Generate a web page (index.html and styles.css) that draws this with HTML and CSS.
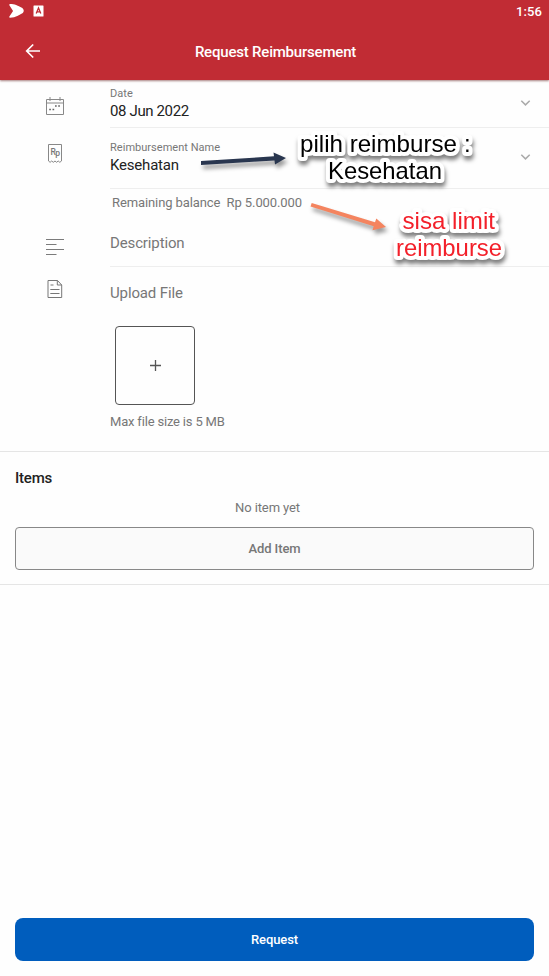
FILE: index.html
```html
<!DOCTYPE html>
<html lang="en">
<head>
<meta charset="utf-8">
<title>Request Reimbursement</title>
<link rel="stylesheet" href="styles.css">
</head>
<body>
<div class="screen">
  <header class="header">
    <div class="status">
      <svg class="status-icons" width="40" height="18" viewBox="0 0 40 18">
        <path d="M2 4.800 Q6 4.300 9.500 6.300 L14 8.700 Q16 10.800 14 12.700 L9.500 15 Q6 17 2 17 L6 11 Z" fill="#fff" stroke="#fff" stroke-width="1.500" stroke-linejoin="round"/>
        <rect x="25.500" y="5.500" width="10" height="11" rx=".5" fill="#fff"/>
        <path d="M28.200 13.500 L30.500 8 L32.800 13.500 M29 11.800 H32" fill="none" stroke="#c12c34" stroke-width="1.300"/>
      </svg>
      <span class="time">1:56</span>
    </div>
    <div class="bar">
      <svg class="back" width="16" height="16" viewBox="0 0 16 16"><path d="M8.200 1.500 L1.700 8 L8.200 14.500 M1.700 8 H15" fill="none" stroke="#fff" stroke-width="1.700"/></svg>
      <h1>Request Reimbursement</h1>
    </div>
  </header>
  <main>
    <section class="row date-row">
      <svg class="icon" width="20" height="20" viewBox="0 0 20 20"><path d="M1.500 3.500 H18.500 V18.500 H1.500 Z M1.500 7 H18.500 M5 1 V5 M15 1 V5" fill="none" stroke="#888" stroke-width="1"/><path d="M4.200 13.500 h1.700 M7.500 13.500 h1.700 M10 10 h1.700 M13.200 10 h1.700" stroke="#666" stroke-width="1.600"/></svg>
      <div class="field">
        <div class="label">Date</div>
        <div class="value">08 Jun 2022</div>
        <svg class="chevron" width="11" height="8" viewBox="0 0 11 8"><path d="M1.300 1.700 L5.500 5.900 L9.700 1.700" fill="none" stroke="#aaa" stroke-width="1.500"/></svg>
      </div>
    </section>
    <section class="row name-row">
      <svg class="icon" width="20" height="22" viewBox="0 0 20 22"><path d="M3.500 19 V2.500 H16.500 V19 M3.500 19 l1.600 1.300 l1.600-1.300 l1.600 1.300 l1.700-1.300 l1.600 1.300 l1.600-1.300 l1.600 1.300 l1.700-1.300" fill="none" stroke="#888" stroke-width="1"/><text x="5.600" y="13.200" class="rp">R</text><text x="10.200" y="14.400" class="rp">p</text></svg>
      <div class="field">
        <div class="label">Reimbursement Name</div>
        <div class="value kesehatan">Kesehatan</div>
        <svg class="chevron" width="11" height="8" viewBox="0 0 11 8"><path d="M1.300 1.700 L5.500 5.900 L9.700 1.700" fill="none" stroke="#aaa" stroke-width="1.500"/></svg>
      </div>
    </section>
    <section class="row desc-row">
      <svg class="icon" width="20" height="20" viewBox="0 0 20 20"><path d="M1 2.500 H19 M1 7.500 H11.500 M1 12.500 H19 M1 17.500 H11.500" stroke="#7b7b7b" stroke-width="1"/></svg>
      <div class="field">
        <div class="balance">Remaining balance&nbsp; Rp 5.000.000</div>
        <div class="placeholder description">Description</div>
      </div>
    </section>
    <section class="row upload-row">
      <svg class="icon" width="20" height="20" viewBox="0 0 20 20"><path d="M3 1.500 H12.500 L16.700 6 V18.500 H3 Z M12.300 1.500 V6 H16.700 M5.500 6 H8.500 M5.300 10.500 H14.500 M5.300 14.500 H14.500" fill="none" stroke="#777" stroke-width="1"/></svg>
      <div class="field">
        <div class="placeholder upload">Upload File</div>
        <div class="drop"><svg width="13" height="13" viewBox="0 0 13 13"><path d="M1 6.500 H12 M6.500 1 V12" stroke="#555" stroke-width="1.300"/></svg></div>
        <div class="hint">Max file size is 5 MB</div>
      </div>
    </section>
    <section class="items">
      <h2>Items</h2>
      <div class="empty">No item yet</div>
      <button class="add">Add Item</button>
    </section>
  </main>
  <footer><button class="request">Request</button></footer>
  <svg class="notes" width="549" height="976" viewBox="0 0 549 976">
    <g class="arrow">
      <path d="M201 161 L274 156.300 L273.500 152.500 L286 158 L275 164.500 L274.500 160.500 L201 165 Z" fill="#29364f"/>
      <path d="M311.700 203 L375 222.300 L376.300 218.500 L386 227 L372.500 230.300 L373.700 226.200 L310.500 206.500 Z" fill="#f4845f"/>
    </g>
    <g class="note">
      <text x="300" y="151.500" textLength="157" lengthAdjust="spacingAndGlyphs">pilih reimburse</text>
      <text x="464" y="151.500">:</text>
      <text x="328" y="178.500" textLength="114" lengthAdjust="spacingAndGlyphs">Kesehatan</text>
      <text class="red" x="402.500" y="228.500" textLength="92.500" lengthAdjust="spacingAndGlyphs">sisa limit</text>
      <text class="red" x="396" y="255.500" textLength="106" lengthAdjust="spacingAndGlyphs">reimburse</text>
    </g>
  </svg>
</div>
</body>
</html>
```
FILE: styles.css
```css
* { box-sizing: border-box; }
body { margin: 0; font-family: Roboto, "Liberation Sans", sans-serif; color: #222; background: #fefefe; }
h1, h2 { margin: 0; font-weight: 500; }
svg { display: block; flex: none; }
button { font-family: inherit; font-weight: 500; display: block; width: 100%; padding: 0; }
.screen { position: relative; width: 549px; height: 976px; display: flex; flex-direction: column; overflow: hidden; }
.header { height: 80px; flex: none; background: #c12c34; color: #fff; box-shadow: 0 1px 2px rgba(80, 0, 0, .5); }
.status { height: 24px; display: flex; justify-content: space-between; padding: 0 7px 0 8px; }
.time { font-size: 13px; font-weight: 500; line-height: 24px; letter-spacing: .1px; }
.bar { height: 56px; display: grid; grid-template-columns: 60px 1fr 60px; align-items: center; }
.back { margin-left: 25px; margin-top: -2px; }
h1 { font-size: 15px; line-height: 56px; text-align: center; letter-spacing: -.2px; padding-left: 2px; }
main { flex: 1; }
.row { display: grid; grid-template-columns: 110px 1fr; }
.icon { margin-left: 45px; }
.field { position: relative; border-bottom: 1px solid #eee; }
.label { font-size: 11px; line-height: 14px; color: #777; letter-spacing: .03px; }
.value { font-size: 15px; line-height: 20px; color: #222; letter-spacing: -.37px; }
.kesehatan { letter-spacing: -.2px; }
.chevron { position: absolute; right: 18px; }
.rp { font-size: 8.5px; font-weight: 500; fill: #777; }
.date-row { height: 48px; }
.date-row .icon { margin-top: 16px; }
.date-row .field { padding-top: 7px; }
.date-row .chevron { top: 19px; }
.name-row { height: 61px; }
.name-row .icon { margin-top: 14px; }
.name-row .field { padding-top: 13px; }
.name-row .chevron { top: 25px; }
.desc-row { height: 78px; }
.desc-row .icon { margin-top: 48px; }
.balance { font-size: 13px; line-height: 18px; padding: 5px 0 0 2px; color: #777; letter-spacing: -.1px; }
.placeholder { font-size: 15px; line-height: 20px; color: #777; letter-spacing: -.13px; }
.description { margin-top: 21px; }
.upload-row { height: 184px; }
.upload-row .icon { margin-top: 12px; }
.upload-row .field { border: 0; }
.upload { margin-top: 16px; }
.drop { width: 80px; height: 79px; margin: 23px 0 0 5px; border: 1px solid #555; border-radius: 4px; display: flex; align-items: center; justify-content: center; }
.hint { margin-top: 8px; font-size: 13px; line-height: 18px; color: #777; letter-spacing: -.18px; }
.items { height: 134px; padding: 16px 15px 0; border-top: 1px solid #e5e5e5; border-bottom: 1px solid #e5e5e5; }
h2 { font-size: 15px; line-height: 20px; letter-spacing: -.2px; }
.empty { margin-top: 10px; font-size: 13px; line-height: 20px; color: #777; text-align: center; padding-right: 14px; letter-spacing: -.1px; }
.add { margin-top: 9px; height: 43px; border: 1px solid #888; border-radius: 4px; background: #fafafa; color: #777; font-size: 13px; letter-spacing: -.1px; }
footer { padding: 0 15px 15px; }
.request { height: 43px; border: 0; border-radius: 8px; background: #005dbd; color: #fff; font-size: 13px; letter-spacing: -.1px; }
.notes { position: absolute; left: 0; top: 0; pointer-events: none; }
.arrow { filter: drop-shadow(2px 4px 2px rgba(0, 0, 0, .4)); }
.note { font-family: "Liberation Sans", sans-serif; font-size: 24px; fill: #000; stroke: #fff; stroke-width: 8px; stroke-linejoin: round; paint-order: stroke; filter: drop-shadow(1px 4px 2px rgba(0, 0, 0, .5)); }
.note .red { fill: #f3202a; }
```
